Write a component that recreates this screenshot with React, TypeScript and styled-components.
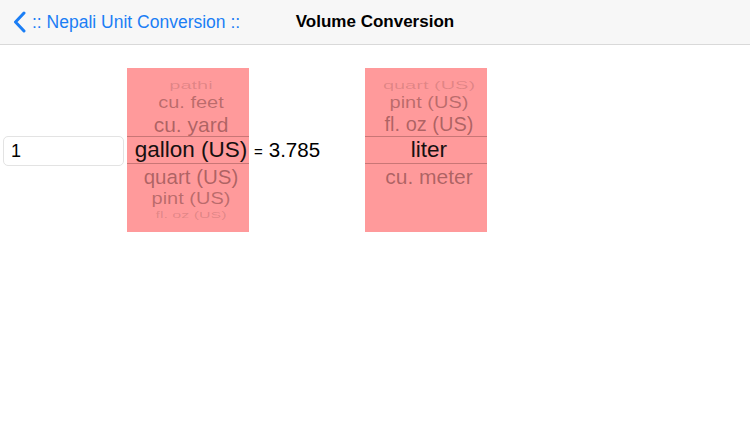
import React from 'react'
import styled, { createGlobalStyle } from 'styled-components'

const GlobalStyle = createGlobalStyle`
html, body {
    margin: 0;
    padding: 0;
    background: #ffffff;
    font-family: "Liberation Sans", Arial, sans-serif;
}
`

const Page = styled.div`
width: 750px;
height: 422px;
background: #ffffff;
overflow: hidden;
`

const NavBar = styled.div`
display: grid;
grid-template-columns: 1fr auto 1fr;
align-items: center;
height: 44px;
background: #f7f7f7;
border-bottom: 1px solid #d9d9d9;
`

const BackButton = styled.div`
display: flex;
align-items: center;
gap: 6px;
padding-left: 13px;
color: #1b7ef5;
font-size: 17.5px;
`

const Title = styled.div`
font-size: 17px;
font-weight: 700;
color: #000000;
`

const Content = styled.div`
display: flex;
align-items: center;
padding: 23px 0 0 3px;
`

const NumberInput = styled.input`
-webkit-appearance: none;
appearance: none;
outline: none;
box-sizing: border-box;
width: 121px;
height: 30px;
margin-top: 2px;
padding: 0 7px;
border: 1px solid #e3e3e3;
border-radius: 5px;
font-family: "Liberation Sans", Arial, sans-serif;
font-size: 18px;
color: #000000;
background: #ffffff;
`

const Picker = styled.div<{ $left: number }>`
display: flex;
flex-direction: column;
width: 122px;
height: 164px;
margin-left: ${p => p.$left}px;
background: #ff9a9b;
overflow: hidden;
`

const Half = styled.div<{ $end?: boolean }>`
display: flex;
flex-direction: column;
justify-content: ${p => (p.$end ? 'flex-end' : 'flex-start')};
height: 68px;
padding-left: 6px;
`

const Selected = styled.div`
display: flex;
align-items: center;
justify-content: center;
box-sizing: border-box;
height: 28px;
padding-left: 6px;
border-top: 1px solid #c97676;
border-bottom: 1px solid #c97676;
font-size: 22.5px;
color: #161010;
white-space: nowrap;
`

const Row = styled.div<{ $h: number; $size: number; $fade: number; $squash: number }>`
display: flex;
align-items: center;
justify-content: center;
height: ${p => p.$h}px;
font-size: ${p => p.$size}px;
color: rgba(60, 20, 20, ${p => p.$fade});
white-space: nowrap;
& > span {
    display: inline-block;
    transform: scaleY(${p => p.$squash});
}
`

const Result = styled.div`
width: 111px;
padding-left: 5px;
font-size: 20.5px;
color: #000000;
white-space: nowrap;
`

const Equals = styled.span`
font-size: 15px;
margin-right: 6px;
`

type RowSpec = { label: string; h: number; size: number; fade: number; squash: number }

const WheelRow: React.FC<RowSpec> = ({ label, h, size, fade, squash }) => (
    <Row $h={h} $size={size} $fade={fade} $squash={squash}>
        <span>{label}</span>
    </Row>
)

const fromAbove: RowSpec[] = [
    { label: 'pathi', h: 14, size: 20, fade: 0.16, squash: 0.5 },
    { label: 'cu. feet', h: 21, size: 20, fade: 0.36, squash: 0.85 },
    { label: 'cu. yard', h: 23, size: 21, fade: 0.42, squash: 1 },
]

const fromBelow: RowSpec[] = [
    { label: 'quart (US)', h: 25, size: 20.5, fade: 0.42, squash: 1 },
    { label: 'pint (US)', h: 19, size: 20, fade: 0.36, squash: 0.85 },
    { label: 'fl. oz (US)', h: 13, size: 16, fade: 0.16, squash: 0.6 },
]

const toAbove: RowSpec[] = [
    { label: 'quart (US)', h: 13, size: 20, fade: 0.16, squash: 0.5 },
    { label: 'pint (US)', h: 21, size: 20, fade: 0.36, squash: 0.85 },
    { label: 'fl. oz (US)', h: 23, size: 20, fade: 0.42, squash: 1 },
]

const toBelow: RowSpec[] = [
    { label: 'cu. meter', h: 26, size: 21, fade: 0.42, squash: 1 },
]

const Wheel: React.FC<{ above: RowSpec[]; below: RowSpec[]; value: string; left: number }> = ({
    above,
    below,
    value,
    left,
}) => (
    <Picker $left={left}>
        <Half $end>
            {above.map(r => (
                <WheelRow key={r.label} {...r} />
            ))}
        </Half>
        <Selected>{value}</Selected>
        <Half>
            {below.map(r => (
                <WheelRow key={r.label} {...r} />
            ))}
        </Half>
    </Picker>
)

const App: React.FC = () => {
    return (
        <Page>
            <GlobalStyle />
            <NavBar>
                <BackButton>
                    <svg width="13" height="22" viewBox="0 0 13 22">
                        <path d="M11 2 L2.5 11 L11 20" fill="none" stroke="#1b7ef5" strokeWidth="3" strokeLinecap="round" strokeLinejoin="round" />
                    </svg>
                    <span>:: Nepali Unit Conversion ::</span>
                </BackButton>
                <Title>Volume Conversion</Title>
                <div />
            </NavBar>
            <Content>
                <NumberInput defaultValue="1" />
                <Wheel above={fromAbove} below={fromBelow} value="gallon (US)" left={3} />
                <Result>
                    <Equals>=</Equals>3.785
                </Result>
                <Wheel above={toAbove} below={toBelow} value="liter" left={0} />
            </Content>
        </Page>
    )
}

export default App
